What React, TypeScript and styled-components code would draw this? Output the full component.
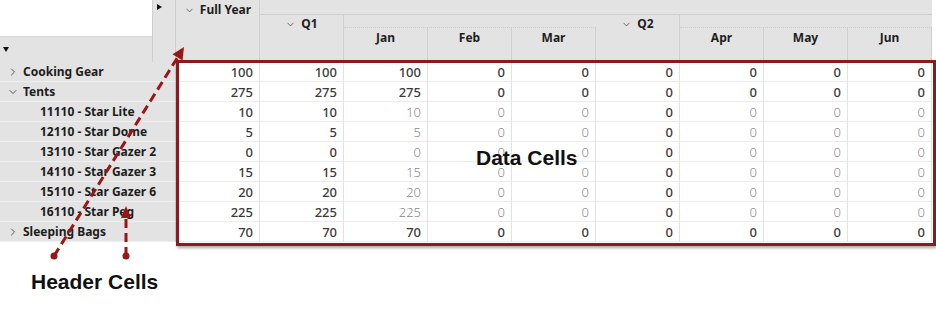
import React from "react";
import styled, { createGlobalStyle } from "styled-components";
import { ChevronDown, ChevronRight } from "lucide-react";

const Global = createGlobalStyle`
  html, body { margin: 0; padding: 0; background: #fff; }
  body { font-family: "Noto Sans", "Open Sans", sans-serif; }
  * { box-sizing: border-box; }
`;

const Page = styled.div`
  position: relative;
  width: 936px;
  height: 324px;
  background: #fff;
  overflow: hidden;
`;

const Pivot = styled.div`
  display: grid;
  grid-template-columns: 176px repeat(9, 84px);
  grid-template-rows: 62px;
  grid-auto-rows: 20px;
  width: 932px;
`;

const Corner = styled.div`
  grid-column: 1;
  grid-row: 1;
  display: grid;
  grid-template-columns: 152px 24px;
  grid-template-rows: 37px 25px;
  border-bottom: 1px solid #d4d4d4;
`;

const BlankArea = styled.div`
  grid-column: 1;
  grid-row: 1;
  background: #fff;
  border-bottom: 1px solid #d8d8d8;
`;

const RowsDrop = styled.div`
  grid-column: 1;
  grid-row: 2;
  background: #e3e3e3;
  display: flex;
  align-items: center;
  padding-left: 3px;
`;

const ColsDrop = styled.div`
  grid-column: 2;
  grid-row: 1 / 3;
  background: #e3e3e3;
  border-left: 1px solid #cfcfcf;
  border-right: 1px solid #cfcfcf;
  padding: 4px 0 0 4px;
`;

const Tri = styled.span<{ $dir: "down" | "right" }>`
  display: block;
  width: 0;
  height: 0;
  ${(p) =>
    p.$dir === "down"
      ? `border-left: 3.5px solid transparent; border-right: 3.5px solid transparent; border-top: 5px solid #111;`
      : `border-top: 3.5px solid transparent; border-bottom: 3.5px solid transparent; border-left: 5px solid #111;`}
`;

const ColHeaders = styled.div`
  grid-column: 2 / 11;
  grid-row: 1;
  display: grid;
  grid-template-columns: repeat(9, 84px);
  grid-template-rows: 15px 13px 34px;
  background: #e3e3e3;
`;

const HeadCell = styled.div<{ $col: string; $row: string; $top: number }>`
  grid-column: ${(p) => p.$col};
  grid-row: ${(p) => p.$row};
  display: flex;
  justify-content: center;
  align-items: flex-start;
  gap: 5px;
  padding-top: ${(p) => p.$top}px;
  border-right: 1px solid #d0d0d0;
  border-bottom: 1px solid #d0d0d0;
  font-size: 12px;
  font-weight: 700;
  color: #1e1e1e;
  line-height: 14px;
  svg { margin-top: 2px; color: #333; }
`;

const Filler = styled.div<{ $col: string; $row: string; $dotted?: boolean }>`
  grid-column: ${(p) => p.$col};
  grid-row: ${(p) => p.$row};
  border-bottom: 1px ${(p) => (p.$dotted ? "dotted" : "solid")} #cdcdcd;
`;

const Label = styled.div<{ $indent: number }>`
  grid-column: 1;
  display: flex;
  align-items: center;
  padding-left: ${(p) => p.$indent}px;
  background: #e3e3e3;
  border-bottom: 1px solid #efefef;
  border-right: 1px solid #cfcfcf;
  font-size: 12px;
  font-weight: 700;
  color: #1c1c1c;
  white-space: nowrap;
`;

const Twist = styled.span`
  width: 16px;
  display: flex;
  align-items: center;
  color: #222;
`;

const Cell = styled.div<{ $strong: boolean }>`
  display: flex;
  align-items: center;
  justify-content: flex-end;
  padding-right: 6px;
  background: #fff;
  border-right: 1px solid #e2e2e2;
  border-bottom: 1px solid #ececec;
  font-size: 13px;
  color: ${(p) => (p.$strong ? "#3a3a3a" : "#8a8a8a")};
  font-weight: ${(p) => (p.$strong ? 500 : 300)};
`;

const Highlight = styled.div`
  position: absolute;
  left: 176px;
  top: 60px;
  width: 760px;
  height: 186px;
  border: 3px solid #8c1a1a;
  box-shadow: 1px 2px 3px rgba(0, 0, 0, 0.35);
  pointer-events: none;
`;

const Callout = styled.div<{ $x: number; $y: number }>`
  position: absolute;
  left: ${(p) => p.$x}px;
  top: ${(p) => p.$y}px;
  font-family: "Liberation Sans", Arial, sans-serif;
  font-weight: 700;
  font-size: 21px;
  color: #111;
  white-space: nowrap;
  line-height: 24px;
`;

const Arrows = styled.svg`
  position: absolute;
  left: 0;
  top: 0;
  pointer-events: none;
`;

type Row = { label: string; kind: "collapsed" | "expanded" | "leaf"; values: number[] };

const rows: Row[] = [
  { label: "Cooking Gear", kind: "collapsed", values: [100, 100, 100, 0, 0, 0, 0, 0, 0] },
  { label: "Tents", kind: "expanded", values: [275, 275, 275, 0, 0, 0, 0, 0, 0] },
  { label: "11110 - Star Lite", kind: "leaf", values: [10, 10, 10, 0, 0, 0, 0, 0, 0] },
  { label: "12110 - Star Dome", kind: "leaf", values: [5, 5, 5, 0, 0, 0, 0, 0, 0] },
  { label: "13110 - Star Gazer 2", kind: "leaf", values: [0, 0, 0, 0, 0, 0, 0, 0, 0] },
  { label: "14110 - Star Gazer 3", kind: "leaf", values: [15, 15, 15, 0, 0, 0, 0, 0, 0] },
  { label: "15110 - Star Gazer 6", kind: "leaf", values: [20, 20, 20, 0, 0, 0, 0, 0, 0] },
  { label: "16110 - Star Peg", kind: "leaf", values: [225, 225, 225, 0, 0, 0, 0, 0, 0] },
  { label: "Sleeping Bags", kind: "collapsed", values: [70, 70, 70, 0, 0, 0, 0, 0, 0] },
];

const strongCols = new Set([0, 1, 5]);

export default function App() {
  return (
    <Page>
      <Global />
      <Pivot>
        <Corner>
          <BlankArea />
          <RowsDrop>
            <Tri $dir="down" />
          </RowsDrop>
          <ColsDrop>
            <Tri $dir="right" />
          </ColsDrop>
        </Corner>
        <ColHeaders>
          <HeadCell $col="1" $row="1 / 4" $top={3}>
            <ChevronDown size={11} strokeWidth={1.5} />
            Full Year
          </HeadCell>
          <Filler $col="2 / 10" $row="1" />
          <HeadCell $col="2" $row="2 / 4" $top={2}>
            <ChevronDown size={11} strokeWidth={1.5} />
            Q1
          </HeadCell>
          <Filler $col="3 / 6" $row="2" $dotted />
          <HeadCell $col="3" $row="3" $top={3}>Jan</HeadCell>
          <HeadCell $col="4" $row="3" $top={3}>Feb</HeadCell>
          <HeadCell $col="5" $row="3" $top={3}>Mar</HeadCell>
          <HeadCell $col="6" $row="2 / 4" $top={2}>
            <ChevronDown size={11} strokeWidth={1.5} />
            Q2
          </HeadCell>
          <Filler $col="7 / 10" $row="2" $dotted />
          <HeadCell $col="7" $row="3" $top={3}>Apr</HeadCell>
          <HeadCell $col="8" $row="3" $top={3}>May</HeadCell>
          <HeadCell $col="9" $row="3" $top={3}>Jun</HeadCell>
        </ColHeaders>
        {rows.map((r) => (
          <React.Fragment key={r.label}>
            <Label $indent={r.kind === "leaf" ? 40 : 7}>
              {r.kind !== "leaf" && (
                <Twist>
                  {r.kind === "collapsed" ? (
                    <ChevronRight size={12} strokeWidth={1.5} />
                  ) : (
                    <ChevronDown size={12} strokeWidth={1.5} />
                  )}
                </Twist>
              )}
              {r.label}
            </Label>
            {r.values.map((v, i) => (
              <Cell key={i} $strong={r.kind !== "leaf" || strongCols.has(i)}>
                {v}
              </Cell>
            ))}
          </React.Fragment>
        ))}
      </Pivot>
      <Highlight />
      <Callout $x={476} $y={146}>Data Cells</Callout>
      <Callout $x={31} $y={270}>Header Cells</Callout>
      <Arrows width="936" height="324" viewBox="0 0 936 324">
        <g stroke="#9a1616" strokeWidth="3" fill="none" strokeDasharray="9 5">
          <line x1="54" y1="256" x2="177.7" y2="57.2" />
          <line x1="126" y1="256" x2="126" y2="217" />
        </g>
        <g fill="#9a1616">
          <circle cx="54" cy="256" r="3.5" />
          <circle cx="126" cy="256" r="3.5" />
          <polygon points="184,47 182.5,60.5 172.5,54.3" />
          <polygon points="126,206 131,218 121,218" />
        </g>
      </Arrows>
    </Page>
  );
}
